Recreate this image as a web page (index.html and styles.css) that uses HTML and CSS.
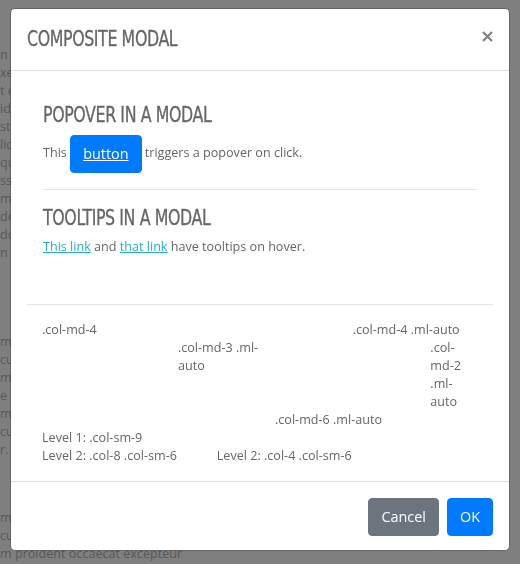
FILE: index.html
```html
<!DOCTYPE html>
<html lang="en">
<head>
<meta charset="utf-8">
<title>Composite modal</title>
<link rel="stylesheet" href="styles.css">
</head>
<body>
<div class="page">
  <div class="para p1">
    <div class="ln">n au</div>
    <div class="ln">xer</div>
    <div class="ln">t es</div>
    <div class="ln">ida</div>
    <div class="ln">st l</div>
    <div class="ln">liqu</div>
    <div class="ln">qui</div>
    <div class="ln">sse</div>
    <div class="ln">mod</div>
    <div class="ln">des</div>
    <div class="ln">dolo</div>
    <div class="ln">n cu</div>
  </div>
  <div class="para p2">
    <div class="ln">m ip</div>
    <div class="ln">cup</div>
    <div class="ln">m a</div>
    <div class="ln">e te</div>
    <div class="ln">min</div>
    <div class="ln">culp</div>
    <div class="ln">r.</div>
  </div>
  <div class="para p3">
    <div class="ln">m do</div>
    <div class="ln">culp</div>
    <div class="ln">m proident occaecat excepteur</div>
  </div>
</div>

<div class="backdrop"></div>

<div class="modal" role="dialog">
  <div class="modal-header">
    <h5 class="modal-title"><span class="cond">Composite Modal</span></h5>
    <button class="close" type="button" aria-label="Close">
      <svg width="11" height="11" viewBox="0 0 11 11"><path d="M1 1L10 10M10 1L1 10" stroke="#808080" stroke-width="2.2" fill="none"/></svg>
    </button>
  </div>
  <div class="modal-body">
    <div class="section">
      <h5 class="heading"><span class="cond">Popover in a modal</span></h5>
      <p class="text">This <a class="btn btn-primary btn-inline" href="#">button</a> triggers a popover on click.</p>
      <hr class="rule">
      <h5 class="heading"><span class="cond">Tooltips in a modal</span></h5>
      <p class="text"><a class="link" href="#">This link</a> and <a class="link" href="#">that link</a> have tooltips on hover.</p>
    </div>
    <hr class="rule">
    <div class="grid">
      <div class="row">
        <div class="col w4">.col-md-4</div>
        <div class="col w4 ml-auto">.col-md-4 .ml-auto</div>
      </div>
      <div class="row">
        <div class="col w3 ml-auto">.col-md-3 .ml-auto</div>
        <div class="col w2 ml-auto">.col-md-2 .ml-auto</div>
      </div>
      <div class="row">
        <div class="col w6 ml-auto">.col-md-6 .ml-auto</div>
      </div>
      <div class="row">
        <div class="col w9">
          Level 1: .col-sm-9
          <div class="row nested">
            <div class="col w6">Level 2: .col-8 .col-sm-6</div>
            <div class="col w6">Level 2: .col-4 .col-sm-6</div>
          </div>
        </div>
      </div>
    </div>
  </div>
  <div class="modal-footer">
    <button class="btn btn-secondary" type="button">Cancel</button>
    <button class="btn btn-primary" type="button">OK</button>
  </div>
</div>
</body>
</html>
```

FILE: styles.css
```css
* { box-sizing: border-box; }

html, body {
  margin: 0;
  height: 100%;
}

body {
  font-family: "Open Sans", "Liberation Sans", sans-serif;
  background: #ffffff;
  overflow: hidden;
}

/* page behind the modal */
.page {
  color: #b2b2b2;
  font-size: 12.6px;
  line-height: 18px;
  white-space: nowrap;
  padding-top: 46px;
}
.para { margin: 0; }
.p2 { margin-top: 71px; }
.p3 { margin-top: 50px; }

.backdrop {
  position: fixed;
  inset: 0;
  background: rgba(0, 0, 0, 0.5);
}

/* modal */
.modal {
  position: absolute;
  left: 10px;
  top: 8px;
  width: 500px;
  background: #ffffff;
  background-clip: padding-box;
  border: 1px solid rgba(0, 0, 0, 0.2);
  border-radius: 5px;
  color: #666666;
}

.modal-header {
  display: flex;
  align-items: flex-start;
  padding: 15px 16px 17px;
  border-bottom: 1px solid #e0e0e8;
}

.modal-title,
.heading {
  font-family: "Liberation Sans Narrow", "DejaVu Sans Condensed", "Liberation Sans", sans-serif;
  font-weight: 400;
  color: #666666;
  -webkit-text-stroke: 0.3px #666666;
}

.cond {
  display: inline-block;
  letter-spacing: -0.5px;
  text-transform: uppercase;
  transform: scaleX(0.8);
  transform-origin: left center;
  white-space: nowrap;
}

.modal-title {
  margin: 0;
  font-size: 22px;
  line-height: 29px;
}

.close {
  margin: 7px 0 0 auto;
  padding: 0;
  border: 0;
  background: transparent;
  width: 11px;
  height: 11px;
  display: flex;
}

.modal-body {
  padding: 16px;
}

.section {
  padding: 16px;
}

.heading {
  margin: 0 0 8px;
  font-size: 22px;
  line-height: 24px;
}

.text {
  margin: 0 0 16px;
  font-size: 12.6px;
  line-height: 18px;
}

.rule {
  margin: 16px 0;
  border: 0;
  border-top: 1px solid rgba(0, 0, 0, 0.1);
  height: 0;
}

.link {
  color: #25aecb;
  text-decoration: underline;
}

/* buttons */
.btn {
  display: inline-block;
  font-family: "Open Sans", "Liberation Sans", sans-serif;
  font-size: 14.4px;
  line-height: 24px;
  padding: 6px 12px;
  border: 1px solid transparent;
  border-radius: 4px;
  color: #ffffff;
  cursor: pointer;
}
.btn-primary { background: #007bff; border-color: #007bff; }
.btn-secondary { background: #6c757d; border-color: #6c757d; }
.btn-inline {
  text-decoration: underline;
  vertical-align: -2px;
}

/* grid */
.grid {
  font-size: 12.6px;
  line-height: 18px;
}
.row {
  display: flex;
}
.row.nested {
  margin: 0 -15px;
}
.col {
  padding: 0 15px;
  flex: none;
}
.w2 { width: 16.6667%; padding-right: 18px; }
.w3 { width: 25%; }
.w4 { width: 33.3333%; }
.w6 { width: 50%; }
.w9 { width: 75%; }
.ml-auto { margin-left: auto; }

.modal-footer {
  display: flex;
  justify-content: flex-end;
  gap: 8px;
  padding: 16px 16px 14px;
  border-top: 1px solid #e0e0e8;
}
```
